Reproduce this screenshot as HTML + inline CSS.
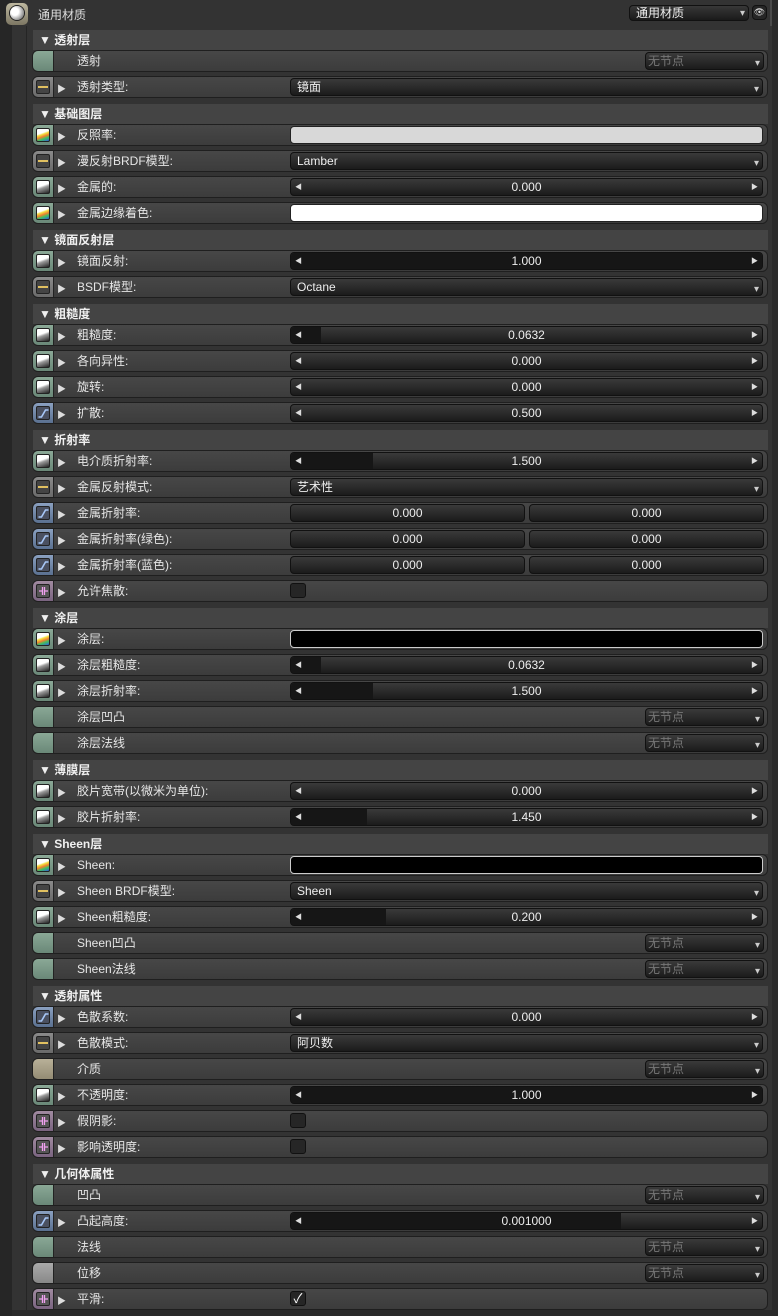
<!DOCTYPE html>
<html><head><meta charset="utf-8"><style>
*{box-sizing:border-box;margin:0;padding:0}
body{width:778px;height:1316px;background:#2a2a2a;font-family:"Liberation Sans","Noto Sans CJK SC",sans-serif;font-size:12px;color:#e0e0e0;position:relative;overflow:hidden}
#strip{position:absolute;left:0;top:0;width:12px;height:1316px;background:#262626}
#panel{position:absolute;left:12px;top:0;width:760px;height:1310px;background:#333;border-right:2px solid #4a4a4a}
#inner{position:absolute;left:26px;top:26px;width:746px;height:1284px;border-left:1px solid #252525;background:#333}
#hdr{position:absolute;left:0;top:0;width:778px;height:26px}
.hico{position:absolute;left:6px;top:3px;width:22px;height:22px;border-radius:5px;background:linear-gradient(#bdb79f,#7d7763);}
.hico:after{content:"";position:absolute;left:4px;top:3px;width:14px;height:14px;border-radius:50%;background:radial-gradient(circle at 35% 40%,#fff 30%,#bbb 55%,#444);box-shadow:0 0 0 1px #222}
.htxt{position:absolute;left:38px;top:6px;font-size:12px;color:#ddd}
.hdd{position:absolute;left:629px;top:5px;width:120px;height:16px;border:1px solid #111;border-radius:4px;background:linear-gradient(#383838,#1a1a1a);color:#eee;padding-left:6px;line-height:14px}
.hdd:after{content:"▾";position:absolute;right:3px;top:1px;font-size:10px;color:#ccc}
.eye{position:absolute;left:752px;top:5px;width:15px;height:15px;border:1px solid #111;border-radius:4px;background:#262626;color:#ddd;font-size:9px;text-align:center;line-height:12px}
#list{position:absolute;left:32px;top:26px;width:736px}
.sec{height:22px;position:relative}
.sec div{position:absolute;left:1px;right:0;top:4px;height:20px;background:#444;font-weight:bold;color:#f0f0f0;padding-left:6px;line-height:20px;font-size:12px}
.row{height:26px;position:relative}
.box{position:absolute;left:0;top:2px;width:736px;height:22px;border:1px solid #1f1f1f;border-radius:6px;background:linear-gradient(#474747,#3c3c3c)}
.ic{position:absolute;left:0;top:0;width:21px;height:20px;border-right:1px solid #222;border-radius:5px 0 0 5px}
.ic i{position:absolute;left:3px;top:3px;width:14px;height:14px;border:1px solid #222;border-radius:2px}
.ic svg{position:absolute;left:0;top:0}
.g{background:linear-gradient(#8aa896,#6a8878)}
.tan{background:linear-gradient(#b8b098,#948c74)}
.gy{background:linear-gradient(#aaa,#888)}
.en{background:linear-gradient(#8a8a8a,#6a6a6a)}
.en i{background:#444}.en i:after{content:"";position:absolute;left:1px;right:1px;top:5px;height:2px;background:#e0c060}
.co{background:linear-gradient(#8aa896,#6a8878)}
.co i{background:linear-gradient(160deg,#fff 35%,#f4e040 45%,#f08030 60%,#40c060 75%,#3060e0)}
.tx{background:linear-gradient(#8aa896,#6a8878)}
.tx i{background:linear-gradient(160deg,#fff 40%,#999 55%,#222)}
.fl{background:linear-gradient(#8aa0c0,#5a7090)}
.fl i{background:#4a5060}
.bo{background:linear-gradient(#a08aa0,#7a6480)}
.bo i{background:#555}
.tri{position:absolute;left:24px;top:5px;font-size:9px;color:#ddd}
.lb{position:absolute;left:44px;top:3px;color:#e6e6e6;line-height:15px}
.ctl{position:absolute;left:257px;top:1px;width:473px;height:18px;border:1px solid #111;border-radius:4px;background:linear-gradient(#3a3a3a,#1b1b1b);overflow:hidden}
.dd{padding-left:6px;line-height:17px;color:#eee}
.dd:after{content:"▾";position:absolute;right:3px;top:2px;font-size:10px;color:#ccc}
.sl{text-align:center;line-height:17px;color:#eee}
.sl b{position:absolute;left:0;top:0;bottom:0;background:#161616}
.sl span{position:relative}
.sl:before{content:"◀";position:absolute;left:4px;top:0;font-size:7px;color:#ddd;z-index:1}
.sl:after{content:"▶";position:absolute;right:4px;top:0;font-size:7px;color:#ddd}
.sw{background:#d8d8d8;border-color:#222}
.node{position:absolute;left:612px;top:1px;width:119px;height:18px;border:1px solid #111;border-radius:4px;background:linear-gradient(#3a3a3a,#1b1b1b);color:#777;padding-left:2px;line-height:17px}
.node:after{content:"▾";position:absolute;right:3px;top:2px;font-size:10px;color:#ccc}
.pr{position:absolute;top:1px;height:18px;width:235px;border:1px solid #111;border-radius:4px;background:linear-gradient(#3a3a3a,#1b1b1b);text-align:center;line-height:17px;color:#eee}
.cb{position:absolute;left:257px;top:2px;width:16px;height:15px;border:1px solid #111;border-radius:3px;background:#262626;color:#fff;font-size:13px;line-height:13px;text-align:center}
</style></head><body>
<svg width="0" height="0" style="position:absolute">
<defs>
<symbol id="bool" viewBox="0 0 21 20"><path d="M6 10H9M12 10H15M9.5 6V14M11.5 6V14" stroke="#f0a0f0" stroke-width="1.3" fill="none"/></symbol>
<symbol id="curve" viewBox="0 0 21 20"><path d="M5.5 14H8.5L12.5 7H15.5" stroke="#a8c8f8" stroke-width="1.6" fill="none"/></symbol>
</defs></svg>
<div id="strip"></div><div id="panel"></div><div id="inner"></div>
<div id="hdr"><div class="hico"></div><div class="htxt">通用材质</div><div class="hdd">通用材质</div><div class="eye">👁</div></div>
<div id="list">
<div class="sec"><div>▼ 透射层</div></div>
<div class="row"><div class="box"><div class="ic g"></div><span class="lb">透射</span><div class="node">无节点</div></div></div>
<div class="row"><div class="box"><div class="ic en"><i></i></div><span class="tri">▶</span><span class="lb">透射类型:</span><div class="ctl dd">镜面</div></div></div>
<div class="sec"><div>▼ 基础图层</div></div>
<div class="row"><div class="box"><div class="ic co"><i></i></div><span class="tri">▶</span><span class="lb">反照率:</span><div class="ctl sw"></div></div></div>
<div class="row"><div class="box"><div class="ic en"><i></i></div><span class="tri">▶</span><span class="lb">漫反射BRDF模型:</span><div class="ctl dd">Lamber</div></div></div>
<div class="row"><div class="box"><div class="ic tx"><i></i></div><span class="tri">▶</span><span class="lb">金属的:</span><div class="ctl sl"><span>0.000</span></div></div></div>
<div class="row"><div class="box"><div class="ic co"><i></i></div><span class="tri">▶</span><span class="lb">金属边缘着色:</span><div class="ctl sw" style="background:#fff"></div></div></div>
<div class="sec"><div>▼ 镜面反射层</div></div>
<div class="row"><div class="box"><div class="ic tx"><i></i></div><span class="tri">▶</span><span class="lb">镜面反射:</span><div class="ctl sl"><b style="width:100%"></b><span>1.000</span></div></div></div>
<div class="row"><div class="box"><div class="ic en"><i></i></div><span class="tri">▶</span><span class="lb">BSDF模型:</span><div class="ctl dd">Octane</div></div></div>
<div class="sec"><div>▼ 粗糙度</div></div>
<div class="row"><div class="box"><div class="ic tx"><i></i></div><span class="tri">▶</span><span class="lb">粗糙度:</span><div class="ctl sl"><b style="width:30px"></b><span>0.0632</span></div></div></div>
<div class="row"><div class="box"><div class="ic tx"><i></i></div><span class="tri">▶</span><span class="lb">各向异性:</span><div class="ctl sl"><span>0.000</span></div></div></div>
<div class="row"><div class="box"><div class="ic tx"><i></i></div><span class="tri">▶</span><span class="lb">旋转:</span><div class="ctl sl"><span>0.000</span></div></div></div>
<div class="row"><div class="box"><div class="ic fl"><i></i><svg width="21" height="20"><use href="#curve"/></svg></div><span class="tri">▶</span><span class="lb">扩散:</span><div class="ctl sl"><span>0.500</span></div></div></div>
<div class="sec"><div>▼ 折射率</div></div>
<div class="row"><div class="box"><div class="ic tx"><i></i></div><span class="tri">▶</span><span class="lb">电介质折射率:</span><div class="ctl sl"><b style="width:82px"></b><span>1.500</span></div></div></div>
<div class="row"><div class="box"><div class="ic en"><i></i></div><span class="tri">▶</span><span class="lb">金属反射模式:</span><div class="ctl dd">艺术性</div></div></div>
<div class="row"><div class="box"><div class="ic fl"><i></i><svg width="21" height="20"><use href="#curve"/></svg></div><span class="tri">▶</span><span class="lb">金属折射率:</span><div class="pr" style="left:257px">0.000</div><div class="pr" style="left:496px">0.000</div></div></div>
<div class="row"><div class="box"><div class="ic fl"><i></i><svg width="21" height="20"><use href="#curve"/></svg></div><span class="tri">▶</span><span class="lb">金属折射率(绿色):</span><div class="pr" style="left:257px">0.000</div><div class="pr" style="left:496px">0.000</div></div></div>
<div class="row"><div class="box"><div class="ic fl"><i></i><svg width="21" height="20"><use href="#curve"/></svg></div><span class="tri">▶</span><span class="lb">金属折射率(蓝色):</span><div class="pr" style="left:257px">0.000</div><div class="pr" style="left:496px">0.000</div></div></div>
<div class="row"><div class="box"><div class="ic bo"><i></i><svg width="21" height="20"><use href="#bool"/></svg></div><span class="tri">▶</span><span class="lb">允许焦散:</span><div class="cb"></div></div></div>
<div class="sec"><div>▼ 涂层</div></div>
<div class="row"><div class="box"><div class="ic co"><i></i></div><span class="tri">▶</span><span class="lb">涂层:</span><div class="ctl sw" style="background:#000;border-color:#ccc"></div></div></div>
<div class="row"><div class="box"><div class="ic tx"><i></i></div><span class="tri">▶</span><span class="lb">涂层粗糙度:</span><div class="ctl sl"><b style="width:30px"></b><span>0.0632</span></div></div></div>
<div class="row"><div class="box"><div class="ic tx"><i></i></div><span class="tri">▶</span><span class="lb">涂层折射率:</span><div class="ctl sl"><b style="width:82px"></b><span>1.500</span></div></div></div>
<div class="row"><div class="box"><div class="ic g"></div><span class="lb">涂层凹凸</span><div class="node">无节点</div></div></div>
<div class="row"><div class="box"><div class="ic g"></div><span class="lb">涂层法线</span><div class="node">无节点</div></div></div>
<div class="sec"><div>▼ 薄膜层</div></div>
<div class="row"><div class="box"><div class="ic tx"><i></i></div><span class="tri">▶</span><span class="lb">胶片宽带(以微米为单位):</span><div class="ctl sl"><span>0.000</span></div></div></div>
<div class="row"><div class="box"><div class="ic tx"><i></i></div><span class="tri">▶</span><span class="lb">胶片折射率:</span><div class="ctl sl"><b style="width:76px"></b><span>1.450</span></div></div></div>
<div class="sec"><div>▼ Sheen层</div></div>
<div class="row"><div class="box"><div class="ic co"><i></i></div><span class="tri">▶</span><span class="lb">Sheen:</span><div class="ctl sw" style="background:#000;border-color:#ccc"></div></div></div>
<div class="row"><div class="box"><div class="ic en"><i></i></div><span class="tri">▶</span><span class="lb">Sheen BRDF模型:</span><div class="ctl dd">Sheen</div></div></div>
<div class="row"><div class="box"><div class="ic tx"><i></i></div><span class="tri">▶</span><span class="lb">Sheen粗糙度:</span><div class="ctl sl"><b style="width:95px"></b><span>0.200</span></div></div></div>
<div class="row"><div class="box"><div class="ic g"></div><span class="lb">Sheen凹凸</span><div class="node">无节点</div></div></div>
<div class="row"><div class="box"><div class="ic g"></div><span class="lb">Sheen法线</span><div class="node">无节点</div></div></div>
<div class="sec"><div>▼ 透射属性</div></div>
<div class="row"><div class="box"><div class="ic fl"><i></i><svg width="21" height="20"><use href="#curve"/></svg></div><span class="tri">▶</span><span class="lb">色散系数:</span><div class="ctl sl"><span>0.000</span></div></div></div>
<div class="row"><div class="box"><div class="ic en"><i></i></div><span class="tri">▶</span><span class="lb">色散模式:</span><div class="ctl dd">阿贝数</div></div></div>
<div class="row"><div class="box"><div class="ic tan"></div><span class="lb">介质</span><div class="node">无节点</div></div></div>
<div class="row"><div class="box"><div class="ic tx"><i></i></div><span class="tri">▶</span><span class="lb">不透明度:</span><div class="ctl sl"><b style="width:100%"></b><span>1.000</span></div></div></div>
<div class="row"><div class="box"><div class="ic bo"><i></i><svg width="21" height="20"><use href="#bool"/></svg></div><span class="tri">▶</span><span class="lb">假阴影:</span><div class="cb"></div></div></div>
<div class="row"><div class="box"><div class="ic bo"><i></i><svg width="21" height="20"><use href="#bool"/></svg></div><span class="tri">▶</span><span class="lb">影响透明度:</span><div class="cb"></div></div></div>
<div class="sec"><div>▼ 几何体属性</div></div>
<div class="row"><div class="box"><div class="ic g"></div><span class="lb">凹凸</span><div class="node">无节点</div></div></div>
<div class="row"><div class="box"><div class="ic fl"><i></i><svg width="21" height="20"><use href="#curve"/></svg></div><span class="tri">▶</span><span class="lb">凸起高度:</span><div class="ctl sl"><b style="width:330px"></b><span>0.001000</span></div></div></div>
<div class="row"><div class="box"><div class="ic g"></div><span class="lb">法线</span><div class="node">无节点</div></div></div>
<div class="row"><div class="box"><div class="ic gy"></div><span class="lb">位移</span><div class="node">无节点</div></div></div>
<div class="row"><div class="box"><div class="ic bo"><i></i><svg width="21" height="20"><use href="#bool"/></svg></div><span class="tri">▶</span><span class="lb">平滑:</span><div class="cb">✓</div></div></div>
</div>
</body></html>
